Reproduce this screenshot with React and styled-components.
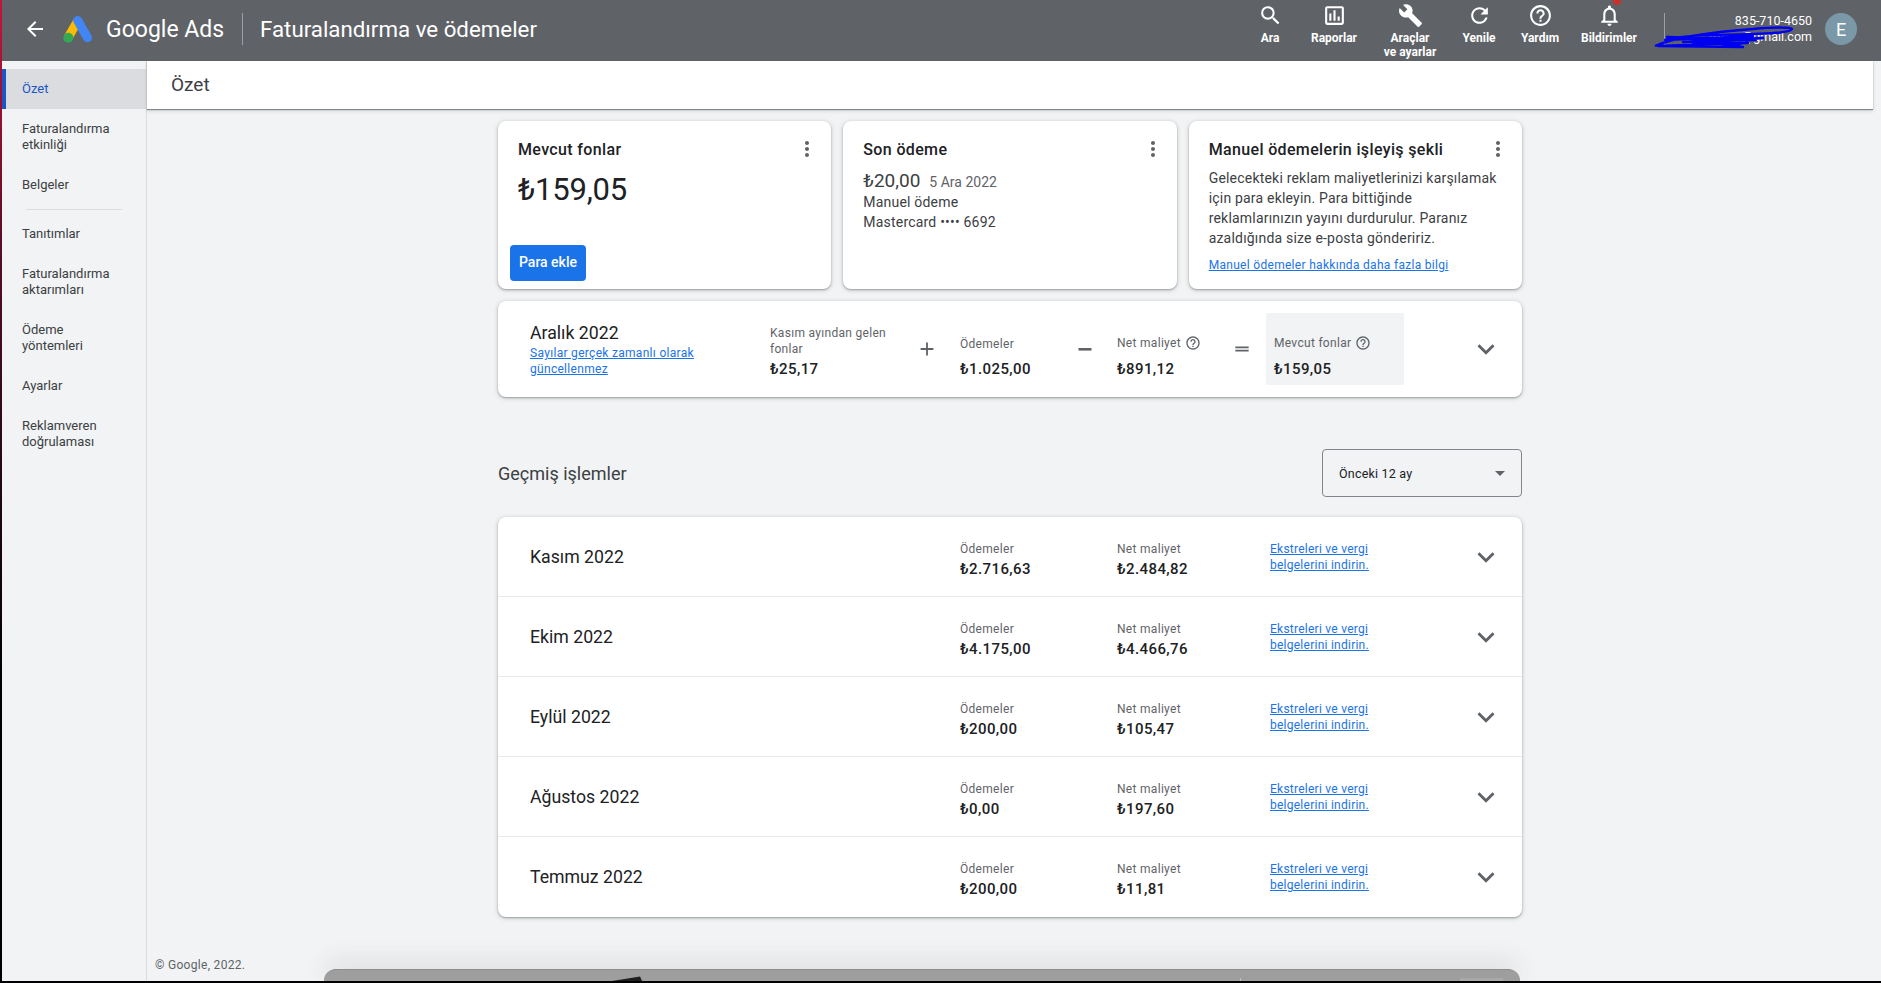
import React from "react";
import styled, { createGlobalStyle } from "styled-components";
import {
  MdArrowBack, MdSearch, MdOutlineAssessment, MdBuild, MdRefresh, MdHelpOutline,
  MdNotificationsNone, MdMoreVert, MdKeyboardArrowDown, MdAdd, MdDragHandle,
} from "react-icons/md";

const Global = createGlobalStyle`
  html, body { margin: 0; padding: 0; height: 100%; overflow: hidden; background: #f1f3f4; }
  body { font-family: Roboto, "Liberation Sans", sans-serif; color: #202124; }
  * { box-sizing: border-box; }
`;

const Shell = styled.div`
  position: relative;
  width: 1881px;
  height: 983px;
  overflow: hidden;
  display: flex;
  flex-direction: column;
  background: #f1f3f4;
  border-bottom: 2px solid #000;
  border-left: 2px solid;
  border-image: linear-gradient(#c8143c 0, #5a0c24 25%, #200810 50%, #000 70%) 1;
`;

const Header = styled.header`
  height: 61px;
  flex: none;
  display: flex;
  align-items: center;
  background: #5f6368;
  color: #fff;
  padding: 0 24px 3px 0;
`;

const BackButton = styled.div`
  width: 24px;
  height: 24px;
  margin-left: 21px;
  display: flex;
  font-size: 24px;
`;

const LogoMark = styled.svg`
  width: 30px;
  height: 27px;
  margin-left: 16px;
  flex: none;
`;

const Brand = styled.div`
  margin-left: 13px;
  font-size: 23px;
  white-space: nowrap;
  width: 119px;
`;

const HeaderRule = styled.div`
  width: 1px;
  height: 32px;
  background: #9aa0a6;
  margin-left: 17px;
`;

const PageTitle = styled.div`
  margin-left: 17px;
  font-size: 22.3px;
  white-space: nowrap;
`;

const Toolbar = styled.nav`
  margin-left: auto;
  display: flex;
  align-self: stretch;
`;

const ToolItem = styled.div`
  position: relative;
  width: ${(p) => p.$w}px;
  display: flex;
  flex-direction: column;
  align-items: center;
  padding-top: 3px;
  font-size: 12px;
  font-weight: 700;
  line-height: 14px;
  text-align: center;
  white-space: pre-line;
  svg { font-size: 25px; display: block; margin-bottom: 3px; flex: none; }
`;

const RedDot = styled.span`
  position: absolute;
  top: -3px;
  left: 49px;
  width: 8px;
  height: 8px;
  border-radius: 50%;
  background: #c5332a;
`;

const ToolRule = styled.div`
  width: 1px;
  height: 32px;
  margin-left: 10px;
  background: #9aa0a6;
`;

const Account = styled.div`
  position: relative;
  width: 147px;
  margin-right: 13px;
  text-align: right;
  font-size: 12.5px;
  line-height: 16px;
  white-space: nowrap;
  direction: rtl;
  span { direction: ltr; unicode-bidi: isolate; display: block; }
`;

const Scribble = styled.svg`
  position: absolute;
  left: -12px;
  top: 13px;
  width: 142px;
  height: 24px;
  overflow: visible;
`;

const Avatar = styled.div`
  width: 32px;
  height: 32px;
  border-radius: 50%;
  background: #7b98a8;
  display: flex;
  align-items: center;
  justify-content: center;
  font-size: 18px;
  color: #fff;
`;

const Body = styled.div`
  flex: 1;
  min-height: 0;
  display: flex;
`;

const Sidebar = styled.aside`
  width: 145px;
  flex: none;
  padding-top: 8px;
  border-right: 1px solid #dadce0;
`;

const NavItem = styled.div`
  padding: 12px 30px 12px ${(p) => (p.$active ? 16 : 20)}px;
  font-size: 13px;
  line-height: 16px;
  color: ${(p) => (p.$active ? "#1a56c4" : "#3c4043")};
  background: ${(p) => (p.$active ? "#dadce0" : "transparent")};
  border-left: ${(p) => (p.$active ? "4px solid #1a56c4" : "none")};
`;

const NavRule = styled.div`
  height: 1px;
  margin: 4px 24px 4px 24px;
  background: #dadce0;
`;

const MainColumn = styled.main`
  flex: 1;
  min-width: 0;
  margin-right: 8px;
  display: flex;
  flex-direction: column;
`;

const SubHeader = styled.div`
  height: 48px;
  flex: none;
  display: flex;
  align-items: center;
  padding: 0 0 1px 24px;
  background: #fff;
  font-size: 19px;
  color: #3c4043;
  box-shadow: 0 1px 1px rgba(60, 64, 67, 0.55), 0 2px 4px rgba(60, 64, 67, 0.15);
`;

const Content = styled.div`
  width: 1024px;
  margin: 12px auto 0;
  flex: none;
`;

const CardRow = styled.div`
  display: grid;
  grid-template-columns: repeat(3, 1fr);
  gap: 12px;
  height: 168px;
`;

const Card = styled.section`
  background: #fff;
  border-radius: 8px;
  box-shadow: 0 1px 2px rgba(60, 64, 67, 0.4), 0 1px 4px 1px rgba(60, 64, 67, 0.14);
  padding: 18px 20px 8px;
  display: flex;
  flex-direction: column;
`;

const CardHead = styled.div`
  display: flex;
  justify-content: space-between;
  align-items: center;
  height: 20px;
  margin-right: -8px;
  font-size: 16px;
  font-weight: 500;
  line-height: 19px;
  color: #202124;
  letter-spacing: 0.35px;
  svg { font-size: 24px; color: #5f6368; }
`;

const BigAmount = styled.div`
  font-size: 31px;
  line-height: 40px;
  margin-top: 11px;
  letter-spacing: -0.2px;
  color: #202124;
`;

const AddButton = styled.button`
  margin: auto 0 0 -8px;
  width: 76px;
  height: 36px;
  border: 0;
  border-radius: 4px;
  background: #1a73e8;
  color: #fff;
  font: 500 14px Roboto, sans-serif;
  padding: 0 0 2px;
`;

const PaymentLine = styled.div`
  display: flex;
  align-items: baseline;
  gap: 9px;
  margin-top: 12px;
  font-size: 19px;
  line-height: 20px;
  color: #3c4043;
  small { font-size: 14px; color: #5f6368; }
`;

const CardText = styled.div`
  font-size: 14px;
  line-height: 20px;
  color: #3c4043;
  margin-top: ${(p) => p.$top || 0}px;
  letter-spacing: 0.2px;
  white-space: pre-line;
`;

const TextLink = styled.a`
  display: block;
  color: #1a73e8;
  text-decoration: underline;
  font-size: 12px;
  line-height: 16px;
  letter-spacing: 0.3px;
  margin-top: ${(p) => p.$top || 0}px;
`;

const Summary = styled.section`
  height: 96px;
  margin-top: 12px;
  padding-left: 32px;
  display: flex;
  align-items: center;
  background: #fff;
  border-radius: 8px;
  box-shadow: 0 1px 2px rgba(60, 64, 67, 0.4), 0 1px 4px 1px rgba(60, 64, 67, 0.14);
`;

const SummaryTitle = styled.div`
  width: 240px;
  flex: none;
  a { max-width: 180px; }
`;

const MonthName = styled.div`
  font-size: 17.7px;
  line-height: 24px;
  color: #202124;
`;

const Figure = styled.div`
  flex: none;
  align-self: flex-end;
  padding: 0 0 18px ${(p) => p.$pad || 0}px;
  width: ${(p) => p.$w}px;
`;

const FigureLabel = styled.div`
  display: flex;
  align-items: center;
  gap: 4px;
  min-height: 16px;
  font-size: 12px;
  line-height: 16px;
  letter-spacing: 0.3px;
  color: #5f6368;
  margin-bottom: ${(p) => (p.$tight ? 2 : 7)}px;
  svg { font-size: 16px; margin: 2px 0; }
`;

const HelpLabel = styled(FigureLabel)`
  margin-bottom: 6px;
`;

const FigureValue = styled.div`
  font-size: 15px;
  font-weight: 500;
  line-height: 20px;
  letter-spacing: 0.4px;
  color: #202124;
`;

const Operator = styled.div`
  width: 34px;
  flex: none;
  display: flex;
  justify-content: center;
  color: #5f6368;
  font-size: ${(p) => p.$size || 22}px;
  svg { display: block; }
`;

const Highlight = styled.div`
  width: 138px;
  height: 72px;
  margin-left: 7px;
  flex: none;
  padding: 0 0 6px 8px;
  background: #f1f3f4;
  border-radius: 2px;
  display: flex;
  flex-direction: column;
  justify-content: flex-end;
`;

const Chevron = styled.div`
  margin: 0 24px 0 auto;
  width: 24px;
  height: 24px;
  font-size: 34px;
  color: #5f6368;
  display: flex;
  align-items: center;
  justify-content: center;
  svg { flex: none; }
`;

const SectionHead = styled.div`
  display: flex;
  justify-content: space-between;
  align-items: center;
  margin-top: 52px;
`;

const SectionTitle = styled.h2`
  margin: 0;
  font-size: 18px;
  font-weight: 400;
  color: #3c4043;
`;

const RangeSelect = styled.div`
  width: 200px;
  height: 48px;
  padding: 0 16px;
  border: 1px solid #80868b;
  border-radius: 4px;
  display: flex;
  justify-content: space-between;
  align-items: center;
  font-size: 12.5px;
  letter-spacing: 0.2px;
  color: #202124;
`;

const Caret = styled.span`
  width: 0;
  height: 0;
  border-left: 5px solid transparent;
  border-right: 5px solid transparent;
  border-top: 5px solid #5f6368;
`;

const HistoryList = styled.section`
  margin-top: 20px;
  background: #fff;
  border-radius: 8px;
  box-shadow: 0 1px 2px rgba(60, 64, 67, 0.4), 0 1px 4px 1px rgba(60, 64, 67, 0.14);
`;

const HistoryRow = styled.div`
  height: 80px;
  padding-left: 32px;
  display: grid;
  grid-template-columns: 430px 157px 153px 1fr 60px;
  align-items: center;
  &:not(:last-child) { border-bottom: 1px solid #e8eaed; }
`;

const RowFigure = styled.div`
  align-self: start;
  padding-top: 24px;
`;

const RowLabel = styled.div`
  font-size: 12px;
  line-height: 16px;
  letter-spacing: 0.3px;
  color: #5f6368;
  margin-bottom: 2px;
`;

const RowLink = styled(TextLink)`
  max-width: 112px;
  letter-spacing: 0.25px;
`;

const Footer = styled.footer`
  margin: 40px 0 0 8px;
  font-size: 12px;
  line-height: 16px;
  letter-spacing: 0.3px;
  color: #5f6368;
`;

const DialogEdge = styled.div`
  position: absolute;
  left: 322px;
  bottom: 0;
  width: 1196px;
  height: 12px;
  background: #9e9e9e;
  border-radius: 20px 20px 0 0;
  border-top: 1px solid #8d8d8d;
  box-shadow: 0 -6px 24px rgba(60, 64, 67, 0.16);
  overflow: hidden;
  svg { display: block; width: 100%; height: 100%; }
`;

const tools = [
  { w: 40, Icon: MdSearch, label: "Ara" },
  { w: 88, Icon: MdOutlineAssessment, label: "Raporlar" },
  { w: 64, Icon: MdBuild, label: "Araçlar\nve ayarlar" },
  { w: 74, Icon: MdRefresh, label: "Yenile" },
  { w: 48, Icon: MdHelpOutline, label: "Yardım" },
  { w: 90, Icon: MdNotificationsNone, label: "Bildirimler", dot: true },
];

const nav = [
  { label: "Özet", active: true },
  { label: "Faturalandırma etkinliği" },
  { label: "Belgeler" },
  { rule: true },
  { label: "Tanıtımlar" },
  { label: "Faturalandırma aktarımları" },
  { label: "Ödeme yöntemleri" },
  { label: "Ayarlar" },
  { label: "Reklamveren doğrulaması" },
];

const history = [
  ["Kasım 2022", "₺2.716,63", "₺2.484,82"],
  ["Ekim 2022", "₺4.175,00", "₺4.466,76"],
  ["Eylül 2022", "₺200,00", "₺105,47"],
  ["Ağustos 2022", "₺0,00", "₺197,60"],
  ["Temmuz 2022", "₺200,00", "₺11,81"],
];

export default function App() {
  return (
    <Shell>
      <Global />
      <Header>
        <BackButton><MdArrowBack /></BackButton>
        <LogoMark viewBox="0 0 30 27">
          <line x1="14.7" y1="5" x2="5" y2="21.7" stroke="#fbbc04" strokeWidth="9" />
          <line x1="14.7" y1="4.5" x2="24.5" y2="21.7" stroke="#4285f4" strokeWidth="9" strokeLinecap="round" />
          <circle cx="5.3" cy="21.7" r="5" fill="#34a853" />
        </LogoMark>
        <Brand>Google Ads</Brand>
        <HeaderRule />
        <PageTitle>Faturalandırma ve ödemeler</PageTitle>
        <Toolbar>
          {tools.map(({ w, Icon, label, dot }) => (
            <ToolItem key={label} $w={w}>
              <Icon />
              {label}
              {dot && <RedDot />}
            </ToolItem>
          ))}
        </Toolbar>
        <ToolRule />
        <Account>
          <span>835-710-4650</span>
          <span>••••••••@gmail.com</span>
          <Scribble viewBox="0 0 142 24">
            <path
              d="M2 20C20 12 60 6 100 3C120 1 138 1 139 3C138 8 100 8 60 9C40 10 25 10 12 14L100 10L30 16L110 12L40 18L95 17L5 20L90 21L45 15L103 14L14 11L88 18"
              fill="none"
              stroke="#0000f0"
              strokeWidth="2.4"
              strokeLinejoin="round"
            />
          </Scribble>
        </Account>
        <Avatar>E</Avatar>
      </Header>
      <Body>
        <Sidebar>
          {nav.map((item, i) =>
            item.rule ? (
              <NavRule key={i} />
            ) : (
              <NavItem key={i} $active={item.active}>{item.label}</NavItem>
            )
          )}
        </Sidebar>
        <MainColumn>
          <SubHeader>Özet</SubHeader>
          <Content>
            <CardRow>
              <Card>
                <CardHead>Mevcut fonlar<MdMoreVert /></CardHead>
                <BigAmount>₺159,05</BigAmount>
                <AddButton>Para ekle</AddButton>
              </Card>
              <Card>
                <CardHead>Son ödeme<MdMoreVert /></CardHead>
                <PaymentLine>₺20,00 <small>5 Ara 2022</small></PaymentLine>
                <CardText>{"Manuel ödeme\nMastercard •••• 6692"}</CardText>
              </Card>
              <Card>
                <CardHead>Manuel ödemelerin işleyiş şekli<MdMoreVert /></CardHead>
                <CardText $top={9}>
                  {"Gelecekteki reklam maliyetlerinizi karşılamak\niçin para ekleyin. Para bittiğinde\nreklamlarınızın yayını durdurulur. Paranız\nazaldığında size e-posta göndeririz."}
                </CardText>
                <TextLink $top={9}>Manuel ödemeler hakkında daha fazla bilgi</TextLink>
              </Card>
            </CardRow>
            <Summary>
              <SummaryTitle>
                <MonthName>Aralık 2022</MonthName>
                <TextLink>Sayılar gerçek zamanlı olarak güncellenmez</TextLink>
              </SummaryTitle>
              <Figure $w={140}>
                <FigureLabel $tight>Kasım ayından gelen fonlar</FigureLabel>
                <FigureValue>₺25,17</FigureValue>
              </Figure>
              <Operator><MdAdd /></Operator>
              <Figure $w={124} $pad={16}>
                <FigureLabel>Ödemeler</FigureLabel>
                <FigureValue>₺1.025,00</FigureValue>
              </Figure>
              <Operator>
                <svg width="22" height="22" viewBox="0 0 22 22">
                  <rect x="4.5" y="10" width="13" height="2.6" fill="currentColor" />
                </svg>
              </Operator>
              <Figure $w={123} $pad={15}>
                <HelpLabel>Net maliyet <MdHelpOutline /></HelpLabel>
                <FigureValue>₺891,12</FigureValue>
              </Figure>
              <Operator $size={20}><MdDragHandle /></Operator>
              <Highlight>
                <HelpLabel>Mevcut fonlar <MdHelpOutline /></HelpLabel>
                <FigureValue>₺159,05</FigureValue>
              </Highlight>
              <Chevron><MdKeyboardArrowDown /></Chevron>
            </Summary>
            <SectionHead>
              <SectionTitle>Geçmiş işlemler</SectionTitle>
              <RangeSelect>Önceki 12 ay<Caret /></RangeSelect>
            </SectionHead>
            <HistoryList>
              {history.map(([month, paid, cost]) => (
                <HistoryRow key={month}>
                  <MonthName>{month}</MonthName>
                  <RowFigure>
                    <RowLabel>Ödemeler</RowLabel>
                    <FigureValue>{paid}</FigureValue>
                  </RowFigure>
                  <RowFigure>
                    <RowLabel>Net maliyet</RowLabel>
                    <FigureValue>{cost}</FigureValue>
                  </RowFigure>
                  <RowLink>Ekstreleri ve vergi belgelerini indirin.</RowLink>
                  <Chevron><MdKeyboardArrowDown /></Chevron>
                </HistoryRow>
              ))}
            </HistoryList>
          </Content>
          <Footer>© Google, 2022.</Footer>
        </MainColumn>
      </Body>
      <DialogEdge>
        <svg viewBox="0 0 1196 12" preserveAspectRatio="none">
          <polygon points="288,12 316,7 318,12" fill="#1f1f1f" />
          <rect x="916" y="9" width="1" height="3" fill="#c4c4c4" />
          <rect x="1136" y="9" width="43" height="3" fill="#aaaaaa" />
        </svg>
      </DialogEdge>
    </Shell>
  );
}
